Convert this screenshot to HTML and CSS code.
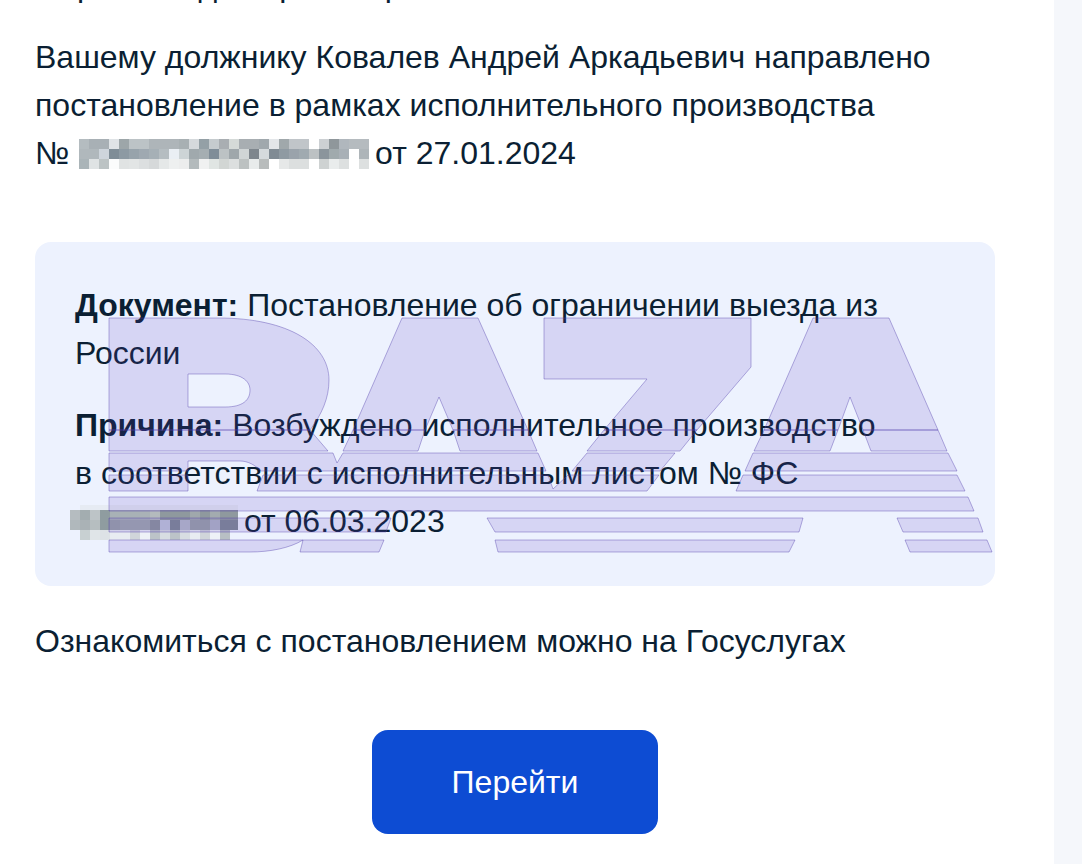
FILE: index.html
```html
<!DOCTYPE html>
<html lang="ru">

<head>
    <meta charset="UTF-8">
    <meta name="viewport" content="width=device-width, initial-scale=1.0">
    <title>Постановление</title>
    <link rel="stylesheet" href="styles.css">
</head>

<body>
    <div class="page">
        <main class="letter">
            <p class="cut-line"><span class="cut-word">Сервисом</span> для просмотра</p>
            <p class="intro">
                Вашему должнику Ковалев Андрей Аркадьевич направлено<br>
                постановление в рамках исполнительного производства<br>
                №
                <svg class="mosaic mosaic-number" width="290" height="30" viewBox="0 0 290 30" shape-rendering="crispEdges" aria-hidden="true">
                    <g>
                        <rect x="0" y="0" width="10" height="10" fill="#b4bcc0"/><rect x="10" y="0" width="10" height="10" fill="#a8b0b5"/><rect x="20" y="0" width="10" height="10" fill="#a8b0b5"/><rect x="30" y="0" width="10" height="10" fill="#dfe3e6"/><rect x="40" y="0" width="10" height="10" fill="#9da6a9"/><rect x="50" y="0" width="10" height="10" fill="#bcc3c6"/><rect x="60" y="0" width="10" height="10" fill="#bcc3c6"/><rect x="70" y="0" width="10" height="10" fill="#aeb5b9"/><rect x="80" y="0" width="10" height="10" fill="#aeb5b9"/><rect x="90" y="0" width="10" height="10" fill="#aeb5b9"/>
                        <rect x="100" y="0" width="10" height="10" fill="#a8b0b3"/><rect x="110" y="0" width="10" height="10" fill="#d5d9dc"/><rect x="120" y="0" width="10" height="10" fill="#94a0a6"/><rect x="130" y="0" width="10" height="10" fill="#c5cbce"/><rect x="140" y="0" width="10" height="10" fill="#a9aeb2"/><rect x="150" y="0" width="10" height="10" fill="#d5dad8"/><rect x="160" y="0" width="10" height="10" fill="#a8aeb2"/><rect x="170" y="0" width="10" height="10" fill="#a8aeb2"/><rect x="180" y="0" width="10" height="10" fill="#a0a8ad"/><rect x="190" y="0" width="10" height="10" fill="#e3e6e9"/>
                        <rect x="200" y="0" width="10" height="10" fill="#a0a8ab"/><rect x="210" y="0" width="10" height="10" fill="#c0c5c9"/><rect x="220" y="0" width="10" height="10" fill="#c0c5c9"/><rect x="230" y="0" width="10" height="10" fill="#ffffff"/><rect x="240" y="0" width="10" height="10" fill="#ccd0d3"/><rect x="250" y="0" width="10" height="10" fill="#8f979b"/><rect x="260" y="0" width="10" height="10" fill="#b0b7bd"/><rect x="270" y="0" width="10" height="10" fill="#b5bbbf"/><rect x="280" y="0" width="10" height="10" fill="#b5bbbf"/>
                    </g>
                    <g>
                        <rect x="0" y="10" width="10" height="10" fill="#b0b8bc"/><rect x="10" y="10" width="10" height="10" fill="#b0b8bc"/><rect x="20" y="10" width="10" height="10" fill="#ced5dc"/><rect x="30" y="10" width="10" height="10" fill="#7f8d97"/><rect x="40" y="10" width="10" height="10" fill="#8d9aa3"/><rect x="50" y="10" width="10" height="10" fill="#97a3ab"/><rect x="60" y="10" width="10" height="10" fill="#9fa9b1"/><rect x="70" y="10" width="10" height="10" fill="#a6b0b6"/><rect x="80" y="10" width="10" height="10" fill="#b5bdc1"/><rect x="90" y="10" width="10" height="10" fill="#eaeff4"/>
                        <rect x="100" y="10" width="10" height="10" fill="#cdd4d6"/><rect x="110" y="10" width="10" height="10" fill="#a0a9ad"/><rect x="120" y="10" width="10" height="10" fill="#a5aeb2"/><rect x="130" y="10" width="10" height="10" fill="#7f8d98"/><rect x="140" y="10" width="10" height="10" fill="#bcc2c4"/><rect x="150" y="10" width="10" height="10" fill="#9fa7ab"/><rect x="160" y="10" width="10" height="10" fill="#d0d5d6"/><rect x="170" y="10" width="10" height="10" fill="#7e868d"/><rect x="180" y="10" width="10" height="10" fill="#d5dadd"/><rect x="190" y="10" width="10" height="10" fill="#808b94"/>
                        <rect x="200" y="10" width="10" height="10" fill="#8f9aa2"/><rect x="210" y="10" width="10" height="10" fill="#9aa3ab"/><rect x="220" y="10" width="10" height="10" fill="#a0aab0"/><rect x="230" y="10" width="10" height="10" fill="#bcc1c3"/><rect x="240" y="10" width="10" height="10" fill="#8b959c"/><rect x="250" y="10" width="10" height="10" fill="#a0aaad"/><rect x="260" y="10" width="10" height="10" fill="#a8b0b6"/><rect x="270" y="10" width="10" height="10" fill="#ffffff"/><rect x="280" y="10" width="10" height="10" fill="#aeb5b9"/>
                    </g>
                    <g>
                        <rect x="0" y="20" width="10" height="10" fill="#aab4b8"/><rect x="10" y="20" width="10" height="10" fill="#dfe3e4"/><rect x="20" y="20" width="10" height="10" fill="#bcc3c4"/><rect x="30" y="20" width="10" height="10" fill="#fbfcfc"/><rect x="40" y="20" width="10" height="10" fill="#e0e3e3"/><rect x="50" y="20" width="10" height="10" fill="#e2e5e5"/><rect x="60" y="20" width="10" height="10" fill="#dcdfe0"/><rect x="70" y="20" width="10" height="10" fill="#d6d9da"/><rect x="80" y="20" width="10" height="10" fill="#e5e8e8"/><rect x="90" y="20" width="10" height="10" fill="#eef0f0"/>
                        <rect x="100" y="20" width="10" height="10" fill="#eceded"/><rect x="110" y="20" width="10" height="10" fill="#b3babc"/><rect x="120" y="20" width="10" height="10" fill="#f0f1f1"/><rect x="130" y="20" width="10" height="10" fill="#e0e5e3"/><rect x="140" y="20" width="10" height="10" fill="#d2d6d4"/><rect x="150" y="20" width="10" height="10" fill="#dcdfdf"/><rect x="160" y="20" width="10" height="10" fill="#bcc1c1"/><rect x="170" y="20" width="10" height="10" fill="#e8ebeb"/><rect x="180" y="20" width="10" height="10" fill="#b8bcbc"/><rect x="190" y="20" width="10" height="10" fill="#ffffff"/>
                        <rect x="200" y="20" width="10" height="10" fill="#e6e8e8"/><rect x="210" y="20" width="10" height="10" fill="#dcdfdf"/><rect x="220" y="20" width="10" height="10" fill="#dcdfdf"/><rect x="230" y="20" width="10" height="10" fill="#ffffff"/><rect x="240" y="20" width="10" height="10" fill="#ced2d2"/><rect x="250" y="20" width="10" height="10" fill="#e9ecec"/><rect x="260" y="20" width="10" height="10" fill="#dde0e0"/><rect x="270" y="20" width="10" height="10" fill="#ffffff"/><rect x="280" y="20" width="10" height="10" fill="#dde0e0"/>
                    </g>
                </svg>
                от 27.01.2024
            </p>

            <section class="notice">
                <p class="notice-text"><b>Документ:</b> Постановление об ограничении выезда из России</p>
                <p class="notice-text">
                    <b>Причина:</b> Возбуждено исполнительное производство<br>
                    в соответствии с исполнительным листом № ФС
                    <svg class="mosaic mosaic-sheet" width="168" height="35" viewBox="0 0 168 35" shape-rendering="crispEdges" aria-hidden="true">
                        <rect x="10" y="0" width="158" height="5" fill="#e6ebf3"/>
                        <g>
                            <rect x="0" y="5" width="10" height="10" fill="#b5bcc0"/><rect x="10" y="5" width="10" height="10" fill="#a3adb0"/><rect x="20" y="5" width="10" height="10" fill="#bdc4c7"/><rect x="30" y="5" width="10" height="10" fill="#8f9ca0"/><rect x="40" y="5" width="30" height="10" fill="#a8b1b6"/><rect x="70" y="5" width="10" height="10" fill="#aab2b7"/><rect x="80" y="5" width="10" height="10" fill="#b4babd"/><rect x="90" y="5" width="30" height="10" fill="#8f999e"/><rect x="120" y="5" width="10" height="10" fill="#a0a8ac"/><rect x="130" y="5" width="10" height="10" fill="#8f999e"/><rect x="140" y="5" width="10" height="10" fill="#a3abaf"/><rect x="150" y="5" width="18" height="10" fill="#8f999e"/>
                        </g>
                        <g>
                            <rect x="0" y="15" width="10" height="10" fill="#b0b8bc"/><rect x="10" y="15" width="10" height="10" fill="#aab2b6"/><rect x="20" y="15" width="10" height="10" fill="#b6bec0"/><rect x="30" y="15" width="10" height="10" fill="#8f9ca0"/><rect x="40" y="15" width="10" height="10" fill="#9aa2a8"/><rect x="50" y="15" width="30" height="10" fill="#a0a8ae"/><rect x="80" y="15" width="10" height="10" fill="#8d959d"/><rect x="90" y="15" width="10" height="10" fill="#c0c8da"/><rect x="100" y="15" width="10" height="10" fill="#7f8994"/><rect x="110" y="15" width="10" height="10" fill="#b5bbca"/><rect x="120" y="15" width="20" height="10" fill="#9aa2a8"/><rect x="140" y="15" width="10" height="10" fill="#b0b6c6"/><rect x="150" y="15" width="18" height="10" fill="#7f8994"/>
                        </g>
                        <g>
                            <rect x="10" y="25" width="10" height="10" fill="#c8d0d2"/><rect x="20" y="25" width="10" height="10" fill="#e0e5e8"/><rect x="30" y="25" width="10" height="10" fill="#dde2e6"/><rect x="40" y="25" width="20" height="10" fill="#e8ecf2"/><rect x="60" y="25" width="10" height="10" fill="#d0d5da"/><rect x="70" y="25" width="10" height="10" fill="#eef1f7"/><rect x="80" y="25" width="10" height="10" fill="#bcc3c8"/><rect x="90" y="25" width="10" height="10" fill="#d8dde2"/><rect x="100" y="25" width="10" height="10" fill="#bcc3c8"/><rect x="110" y="25" width="10" height="10" fill="#d8dde2"/><rect x="120" y="25" width="10" height="10" fill="#e8ecf2"/><rect x="130" y="25" width="10" height="10" fill="#d0d5da"/><rect x="140" y="25" width="10" height="10" fill="#eef1f7"/><rect x="150" y="25" width="10" height="10" fill="#b8bfc4"/>
                        </g>
                    </svg>
                    от 06.03.2023
                </p>

                <!-- водяной знак поверх карточки, координаты как на макете -->
                <svg class="watermark" width="900" height="250" viewBox="100 310 900 250" aria-hidden="true">
                    <path fill-rule="evenodd" d="M109 318H218C290 318 329 345 329 380C329 398 322 414 310 430H109ZM188 374V407H225C243 407 250 400 250 390C250 382 243 374 225 374Z"/>
                    <path d="M109 430H310L328 451H109Z"/>
                    <path d="M402 318H478L528 430H453L439 397L425 430H353Z"/>
                    <path d="M353 430H425L418 451H343Z"/>
                    <path d="M453 430H528L537 451H460Z"/>
                    <path d="M544 318H751V367L697 430H604L647 379H544Z"/>
                    <path d="M604 430H697L680 451H587Z"/>
                    <path d="M813 318H889L938 430H863L850 397L838 430H764Z"/>
                    <path d="M764 430H838L830 451H754Z"/>
                    <path d="M863 430H938L947 451H871Z"/>
                    <path d="M109 453H333L337 463L343 453H538L546 471H261C255 465 248 461 240 461H188V471H109Z"/>
                    <path d="M587 453H675L660 471H572Z"/>
                    <path d="M753 453H948L957 471H745Z"/>
                    <path d="M109 475H188V491H109Z"/>
                    <path d="M263 475H548L553 489L568 475H659L647 491H257Z"/>
                    <path d="M743 475H957L965 491H736Z"/>
                    <path d="M109 497H968L974 511H109Z"/>
                    <path d="M109 518H391L386 532H109Z"/>
                    <path d="M487 518H803L799 532H495Z"/>
                    <path d="M897 518H978L983 532H903Z"/>
                    <path d="M109 540H303C290 548 270 552 250 552H109Z"/>
                    <path d="M303 540H384L379 552H300Z"/>
                    <path d="M495 540H795L789 552H498Z"/>
                    <path d="M905 540H987L992 552H910Z"/>
                </svg>
            </section>

            <p class="outro">Ознакомиться с постановлением можно на Госуслугах</p>

            <div class="actions">
                <a class="btn-go" href="#">Перейти</a>
            </div>
        </main>
        <aside class="side"></aside>
    </div>
</body>

</html>
```

FILE: styles.css
```css
html,
body {
    height: 100%;
    margin: 0;
    overflow: hidden;
}

body {
    background-color: #FFF;
    color: #0b1f33;
    font-family: "Liberation Sans", Arial, sans-serif;
    font-size: 32px;
    line-height: 48px;
}

p {
    margin: 0;
}

.page {
    display: flex;
    height: 864px;
    overflow: hidden;
}

.letter {
    flex: 1;
    padding: 0 59px 0 35px;
}

.side {
    width: 28px;
    background-color: #f5f7fb;
}

.cut-line {
    margin-top: -39px;
    margin-bottom: 24px;
}

.cut-word {
    letter-spacing: 0.6px;
}

.mosaic {
    display: inline-block;
}

.mosaic-number {
    margin: 0 -3px 0 1px;
    vertical-align: -5px;
}

.mosaic-sheet {
    margin: 0 -3px 0 -5px;
    vertical-align: -8px;
}

.notice {
    position: relative;
    margin-top: 65px;
    padding: 39px 40px 41px;
    border-radius: 16px;
    background-color: #edf2fe;
}

.notice-text + .notice-text {
    margin-top: 24px;
}

.watermark {
    position: absolute;
    top: 68px;
    left: 65px;
    pointer-events: none;
}

.watermark path {
    fill: rgba(91, 64, 190, 0.16);
    stroke: rgba(80, 60, 170, 0.4);
    stroke-width: 1;
    stroke-linejoin: round;
}

.outro {
    margin-top: 31px;
}

.actions {
    display: flex;
    justify-content: center;
    margin-top: 65px;
}

.btn-go {
    display: flex;
    align-items: center;
    justify-content: center;
    width: 286px;
    height: 104px;
    border-radius: 16px;
    background-color: #0d4cd3;
    color: #FFF;
    text-decoration: none;
}
```
